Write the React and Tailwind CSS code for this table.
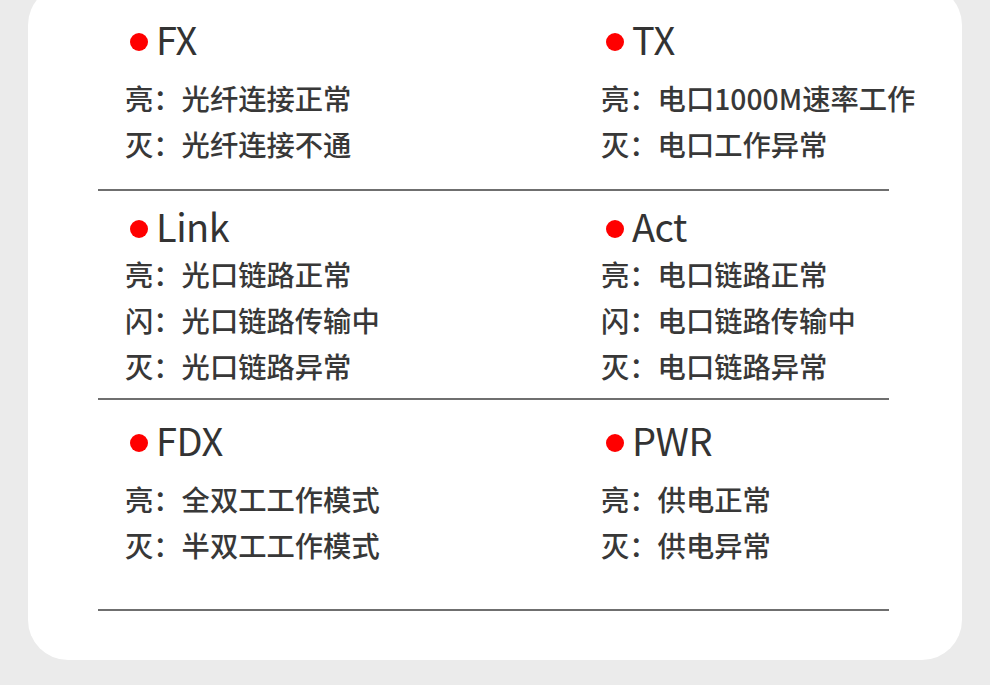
const sections = [
  {
    head: 'pt-[19px]',
    gap: 'mt-[10px]',
    bottom: 'pb-[22px]',
    items: [
      { title: 'FX', lines: ['亮：光纤连接正常', '灭：光纤连接不通'] },
      { title: 'TX', lines: ['亮：电口1000M速率工作', '灭：电口工作异常'] },
    ],
  },
  {
    head: 'pt-[15px]',
    gap: 'mt-[-1px]',
    bottom: 'pb-[9px]',
    items: [
      { title: 'Link', lines: ['亮：光口链路正常', '闪：光口链路传输中', '灭：光口链路异常'] },
      { title: 'Act', lines: ['亮：电口链路正常', '闪：电口链路传输中', '灭：电口链路异常'] },
    ],
  },
  {
    head: 'pt-[20px]',
    gap: 'mt-[10px]',
    bottom: 'pb-[41px]',
    items: [
      { title: 'FDX', lines: ['亮：全双工工作模式', '灭：半双工工作模式'] },
      { title: 'PWR', lines: ['亮：供电正常', '灭：供电异常'] },
    ],
  },
];

const Entry = ({ item, gap }) => (
  <div className="flex flex-col">
    <div className="flex items-center h-[46px] pl-[5px] gap-[8px]">
      <span className="w-[18px] h-[18px] rounded-full bg-[#ff0000] shrink-0" />
      <span className="text-[38px] leading-[40px] mb-[6px] text-[#333333] tracking-[-0.5px]">
        {item.title}
      </span>
    </div>
    <div className={gap}>
      {item.lines.map((line) => (
        <div key={line} className="text-[28.3px] leading-[46px] font-medium text-[#383838] whitespace-nowrap">
          {line}
        </div>
      ))}
    </div>
  </div>
);

export default function App() {
  return (
    <div
      className="h-[685px] overflow-hidden bg-[#ebebeb]"
      style={{ fontFamily: '"Noto Sans CJK SC", "Noto Sans", sans-serif' }}
    >
      <div className="mx-[28px] w-[934px] mt-[-15px] pt-[15px] h-[675px] bg-white rounded-[40px]">
        {sections.map((sec, i) => (
          <div key={i} className={`ml-[70px] w-[791px] ${sec.head} ${sec.bottom} border-b-2 border-[#6f6f6f]`}>
            <div className="grid grid-cols-[476px_1fr] pl-[27px]">
              {sec.items.map((item) => (
                <Entry key={item.title} item={item} gap={sec.gap} />
              ))}
            </div>
          </div>
        ))}
      </div>
    </div>
  );
}
